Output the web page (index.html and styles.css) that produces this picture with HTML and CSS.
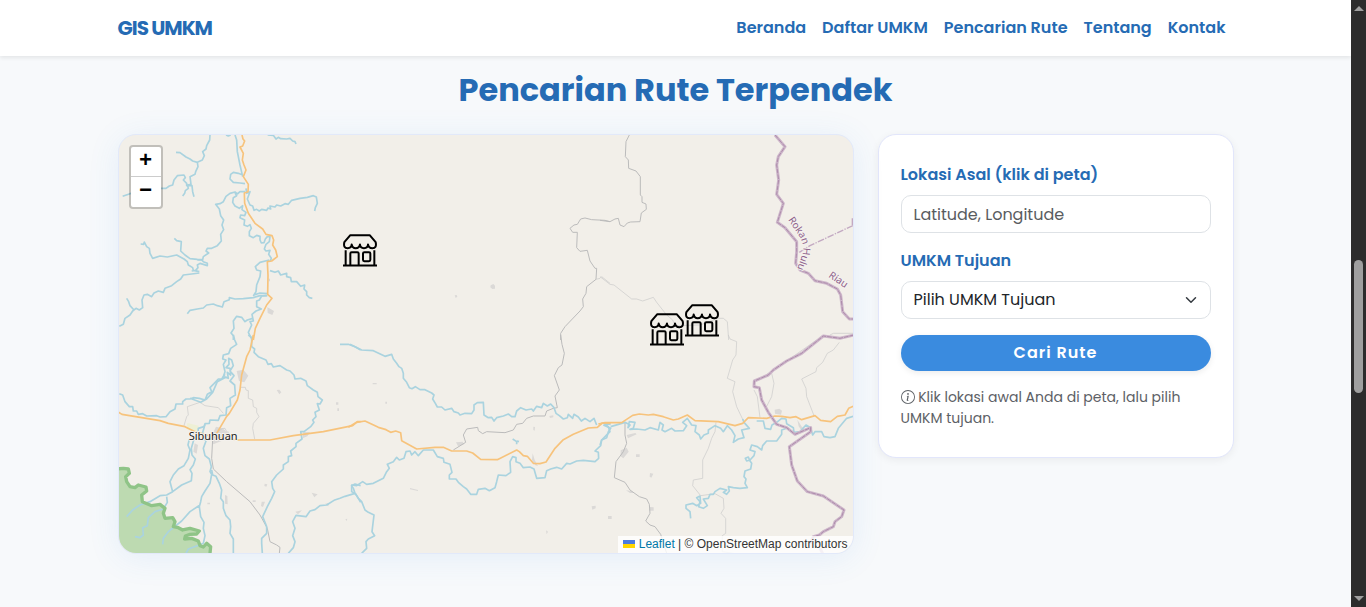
FILE: index.html
```html
<!DOCTYPE html>
<html lang="id">
<head>
<meta charset="utf-8">
<meta name="viewport" content="width=device-width, initial-scale=1">
<title>GIS UMKM</title>
<link rel="stylesheet" href="styles.css">
</head>
<body>
<div class="page">
  <header class="navbar">
    <div class="container navbar-inner">
      <a class="brand" href="#">GIS UMKM</a>
      <nav class="nav">
        <a href="#beranda">Beranda</a>
        <a href="#daftar">Daftar UMKM</a>
        <a href="#rute">Pencarian Rute</a>
        <a href="#tentang">Tentang</a>
        <a href="#kontak">Kontak</a>
      </nav>
    </div>
  </header>
  <main class="container" id="rute">
    <h2 class="title">Pencarian Rute Terpendek</h2>
    <div class="row">
      <section class="map" aria-label="Peta">
        <svg class="map-canvas" viewBox="119 135 734 418" preserveAspectRatio="xMidYMid slice">
          <defs>
            <symbol id="store" viewBox="0 0 102 98">
              <g fill="none" stroke="#000" stroke-width="6" stroke-linejoin="round">
                <path d="M22 3H80L98 24Q102 42 88 42Q77 42 75 31Q74 42 63 42Q52 42 51 31Q49 42 38 42Q28 42 26 31Q25 42 14 42Q0 42 4 24Z"/>
                <path d="M8 48V92M94 48V92M0 94H102M22 92V58Q22 54 26 54H43Q47 54 47 58V92"/>
                <rect x="60" y="54" width="22" height="27" rx="4"/>
              </g>
            </symbol>
            <path id="rokan" d="M564 284L598 334Q616 362 606 392L590 436"/>
          </defs>

          <!-- north west -->
          <g transform="translate(110 125) scale(.33333)">
            <path class="urban" d="M472 547l6 3 14 8-5 12-14-6zM476 460l4 2v7h-4z"/>
            <path class="river" d="M300 30L299 45L290 62L288 72L278 80L283 92L277 105L262 112L264 125L257 140L255 148L240 155L243 178L232 180L235 190L226 197L224 205L218 213M198 82L210 83L228 96L240 102L248 108L262 112M38 214L60 206L150 190L168 190L178 183L188 180L192 165L202 152L222 150L226 158L220 165L230 175L230 182L246 182L248 200L252 215M348 30L355 33L362 30"/>
            <path class="river" d="M375 30L380 45L382 80L390 120L398 155M398 150L385 145L370 142L362 148L360 162L370 172L390 174L405 176M473 30L490 31L498 42L505 37L512 41L530 42L540 40L548 48L555 50L558 57"/>
            <path class="river" d="M408 190L410 205L420 200L412 222L420 240L428 243L432 256L440 253L448 258L455 253L470 256L474 249L482 252L480 243L495 246L500 240L512 243L525 236L535 238L545 226L570 220L592 217L610 212L619 216L622 235L616 248L614 258"/>
            <path class="river" d="M405 200L390 200L382 207L375 201L360 205L348 214L340 230L330 236L317 238L328 252L332 272L341 285L336 300L341 314L332 328L334 348L322 362L305 370L292 370L288 378L296 384L280 395L278 404L262 403L240 401L225 390L212 378L214 350L200 347L193 340"/>
            <path class="river" d="M375 204L380 212L370 218L368 232L375 243L388 250L398 242L396 254L408 262L404 272L392 270L390 278L404 285L402 300L412 304L420 299L424 310L418 320L418 332L430 338L440 331L450 334L450 345L454 354L462 353L466 342L472 335L480 335L478 350L468 358L463 372L468 378L480 376L476 388L484 400L480 410"/>
            <path class="river" d="M92 357L101 358L103 351L110 365L118 370L120 385L128 400L150 393L172 396L200 390L222 402L232 410L235 420L248 428L250 436L268 440M262 405L275 405L280 410L292 415L292 422L270 415L262 420L264 428L257 436L245 438"/>
            <path class="river" d="M28 604L40 598L45 580L60 570L68 558L78 550L88 555L98 548L96 525L102 510L112 508L125 515L132 504L145 498L160 502L165 490L185 482L200 470L212 462L220 450L245 447L268 444M50 520L56 530L60 542L72 555"/>
            <path class="river" d="M478 405L450 412L436 425L440 435L452 438L450 455L440 480L438 500L430 513M473 506L450 504L432 510M232 566L240 556L262 552L280 549L290 540L310 537L322 542L337 546L342 530L358 524L358 518L375 522L400 521L430 518L450 512L470 512"/>
            <path class="river" d="M480 437L495 442L505 438L512 450L530 445L530 455L542 458L544 470L560 470L572 484L584 480L582 492L590 500L590 510L598 518L607 520M472 512L455 513L448 525L440 528L440 545L454 552L438 558L426 568L430 588L420 590L425 600L415 622L424 640M428 580L412 585L405 590L395 577L380 574L370 588L372 610L363 624L370 632L370 645"/>
            <path class="highway" d="M396 30L399 42L404 48L398 63L390 66L400 85L397 105L402 120L408 135L400 155L415 178L414 200L403 204L404 235L415 265L435 295L458 312L468 328L486 332L491 345L488 360L497 375L502 395L485 408L472 410L474 450L473 508L486 520L470 540L450 580L436 610L430 645"/>
          </g>

          <!-- north -->
          <g transform="translate(350 125) scale(.33333)">
            <path class="urban" d="M422 481l8-4 5 5v9l-8 1-6-5zM314 511l6-1 2 5-5 4z"/>
            <path class="road" d="M780 290L765 286L725 284L705 279L692 282L682 298L672 300L660 310L668 322L682 322L680 368L690 379L712 376L720 408L735 430L740 430L738 463L710 485L708 505L698 522L700 545L690 558L645 605L632 625L632 645"/>
            <path class="lane" d="M738 463L750 460L755 455L780 475"/>
          </g>

          <!-- north east -->
          <g transform="translate(600 125) scale(.33333)">
            <path class="road" d="M88 30L78 50L76 95L85 105L86 130L108 138L121 155L121 210L126 215L126 232L138 237L139 253L124 264L120 290L92 291L82 294L72 305L60 300L55 280L45 282L30 290L0 286"/>
            <path class="lane" d="M0 455L30 478L42 480L95 522L110 522L128 528L160 517L170 532L200 570L218 585L225 602L300 600L355 580L370 580L382 590L386 645M690 630L700 625L760 625"/>
            <path class="border" d="M525 30L555 65L535 95L530 120L536 165L530 208L550 235L532 292L555 308L590 350L590 380L587 415L600 435L625 445L645 467L680 475L712 492L722 510L728 560L748 582L762 582"/>
            <path class="border-core" d="M525 30L555 65L535 95L530 120L536 165L530 208L550 235L532 292L555 308L590 350L590 380L587 415L600 435L625 445L645 467L680 475L712 492L722 510L728 560L748 582L762 582"/>
            <path class="district" d="M598 382L630 362L762 300M757 280V302"/>
            <text class="region"><textPath href="#rokan">Rokan Hulu</textPath></text>
            <text class="region" transform="translate(684 455) rotate(34)">Riau</text>
          </g>

          <!-- south west -->
          <g transform="translate(110 335) scale(.33333)">
            <path class="urban" d="M380 108l20-4 15 18-12 20-16-4zM500 165l8-1 6 8-6 6zM254 325l10 5-4 26-10-6zM345 480l7 3 1 25-8-2zM318 275l20 5 16 14-10 20-34 14-8-18zM605 473l18 5-10 9zM455 500l10 0-6 16-6-3zM580 290l20 2-8 12-14 6zM556 530l20-4-12 12zM464 446l8 2-3 7-6-2zM678 202h7v7h-7zM682 220h5v8h-5zM428 496h9v5h-9zM706 553l6-2-2 7zM292 503h8v5h-8zM645 506l12-2-2 10z"/>
            <path class="field" d="M232 264l34 8-4 18-32-8z"/>
            <path class="forest" d="M20 398L40 400L55 402L58 415L47 425L50 440L60 455L75 458L85 450L108 456L110 468L95 480L97 500L125 512L150 508L165 520L160 535L165 550L188 548L195 560L190 575L205 578L218 585L240 580L268 588L260 597L240 598L226 603L224 612L245 610L265 618L270 632L280 636L290 625L302 635L303 670L20 670Z"/>
            <path class="road" d="M308 312L305 370L310 402L350 440L420 500L450 540L472 580L480 620L500 630L510 637L508 655"/>
            <path class="lane" d="M392 157L406 157L408 165L415 167L415 190L428 195L430 215L440 220L440 232L447 245L430 265L428 280L434 312M222 272L230 245L235 240L232 215L270 202L285 212L325 218L340 235M320 300Q330 278 345 280Q350 295 357 292"/>
            <path class="river" d="M370 0L374 15L380 28L362 40L356 56L340 60L338 72L348 75L340 88L345 110L340 125L355 130L352 112L362 120L360 100L348 98L357 88L356 70L365 75L370 92L360 108L372 122L360 138L374 150L376 180L360 190L362 212L350 218L348 240L330 242L325 256L300 255L298 265L285 266L282 275L265 280L264 292"/>
            <path class="river" d="M345 118L335 132L325 132L312 146L300 158L305 170L292 178L285 195L268 190L250 188L240 192L228 192L218 200L218 207L198 207L195 222L180 230L168 245L150 246L140 242L110 243L98 236L85 238L80 228L70 228L68 215L58 215L45 200L38 180L28 176M350 125L322 140L308 172L290 192L272 202L240 190"/>
            <path class="river" d="M415 0L425 8L425 35L434 42L432 52L445 65L468 75L474 88L484 86L490 96L510 92L530 105L540 108L552 120L555 132L572 130L588 138L592 152L610 165L622 172L624 185L637 195L630 207L622 206L628 225L615 232L618 245L608 255L612 262L602 275L582 290L572 290L576 312L558 325L558 335L542 348L545 362L535 365L535 380L520 390L520 402L500 420L485 440L488 460L494 470L485 490L472 515L458 545L470 575L470 595L455 610L455 625L457 655"/>
            <path class="river" d="M285 268L276 300L288 318L280 340L285 362L298 372L304 395L300 410L305 418L300 445L285 468L275 485L272 500L268 515L272 545L282 562L280 580L285 602L280 625L262 632L235 642L228 655M305 405L308 420L318 424L328 445L335 465L332 490L340 500L340 520L348 542L360 555L362 575L360 595L370 612L370 655M270 510L240 530L215 558L175 590L160 610L158 628"/>
            <path class="river" d="M238 312L234 330L240 345L235 370L222 392L205 402L190 420L180 440L188 470M252 312L244 340L246 360L256 372L250 390L240 404L246 415L244 437L215 450L188 470L170 480L150 482L120 500L90 510L68 525L50 545M170 485L172 502L160 522L135 530L115 548L112 572L98 578L100 600L90 608L75 605"/>
            <path class="river" d="M535 655L550 638L555 620L548 602L555 580L548 560L558 541L588 545L600 528L615 524L630 512L650 510L672 496L690 490L705 484L735 475L730 460L725 452L735 447L752 452M735 475L745 490L752 502M690 28L715 28L735 35L752 45"/>
            <path class="highway" d="M430 0L420 45L410 65L395 120L390 165L382 195L358 235L350 244L320 295M20 228L36 238L150 257L175 265L225 275L255 290L310 306L385 315L480 315L550 302L640 290L728 272L742 260L752 260"/>
            <path class="forest-edge" d="M20 402L40 400L55 402L58 415L47 425L50 440L60 455L75 458L85 450L108 456L110 468L95 480L97 500L125 512L150 508L165 520L160 535L165 550L188 548L195 560L190 575L205 578L218 585L240 580L268 588L260 597L240 598L226 603L224 612L245 610L265 618L270 632L280 636L290 625L302 635L300 655"/>
            <text class="town" x="236" y="314">Sibuhuan</text>
          </g>

          <!-- south -->
          <g transform="translate(350 335) scale(.33333)">
            <path class="urban" d="M318 322l20-2 4 8-18 6zM725 514l12-2v8l-10 4zM588 586l6 4-4 8zM598 243l12-2v6l-10 2zM68 144h12v4h-12zM106 200h5v6h-5zM180 459l24 6v3l-24-5zM550 275l5 1-1 11-4-2zM548 355l6 20 10 18-8-2-10-16zM775 543h6v8h-6z"/>
            <path class="road" d="M632 0L636 28L643 55L636 90L625 98L613 122L628 165L615 183L622 218L610 220L590 228L585 243L550 243L530 250L518 265L500 268L490 285L465 293L410 290L398 296L385 287L383 277L350 282L340 300L347 322L310 345"/>
            <path class="river" d="M0 28L35 45L70 47L105 64L125 58L130 72L140 85L147 95L155 100L160 115L160 130L170 142L178 158L186 161L196 155L210 164L225 164L245 174L252 180L248 192L256 205L262 216L275 216L285 225L305 220L312 230L325 234L330 240L345 235L365 236L372 225L372 210L382 203L400 202L402 240L415 248L425 247L432 258L440 248L460 243L475 237L485 245L495 245L500 228L512 218L528 225L545 222L550 228L560 214L575 218L580 205L592 213L602 207L612 218L618 235L628 242L640 252L652 248L655 238L668 250L672 238L685 246L694 258L705 250L720 260L732 250L740 270"/>
            <path class="river" d="M782 268L760 264L775 275L780 290L768 302L755 315L752 332L735 348L745 352L746 370L735 380L700 376L680 378L660 387L650 385L635 402L620 397L602 402L590 407L585 428L560 430L552 402L540 396L520 398L510 385L498 380L498 368L488 365L480 380L482 412L468 422L445 420L440 440L435 458L418 467L405 460L385 463L380 478L362 478L350 462L340 455L325 442L318 432L298 432L298 420L306 412L300 388L282 382L280 370L262 365L250 345L220 345L205 362L195 350L185 360L180 348L168 350L162 370L148 375L140 367L130 380L112 388L118 400L110 410L100 430L70 445L50 448L38 440L20 452L5 450L5 470L18 478L25 490L35 500L45 525L55 532L72 540L66 590L74 602L55 612L48 620L50 640L35 655M488 312L500 320L500 328M500 318L507 320"/>
            <path class="highway" d="M-5 277L20 262L45 258L85 277L108 284L122 292L137 288L152 293L155 317L200 342L255 337L280 337L305 348L350 348L368 354L392 373L442 374L500 345L508 350L520 362L532 364L550 385L570 386L588 381L615 340L640 314L670 298L715 279L742 277L757 264L782 264"/>
          </g>

          <!-- south east -->
          <g transform="translate(600 335) scale(.33333)">
            <path class="urban" d="M524 224l14-3 8 6-3 12-18-3zM592 254l14 22 8 6-10 4-8-12zM80 300l26-6 4 4-26 12zM62 346l18-8 6 12-16 20-8-6zM108 358h11v8h-11zM150 414l10 2-6 12-5-3zM148 516l13 1v10h-13zM24 543h11v9h-11zM78 466l18 2 4 6-10 0z"/>
            <path class="road" d="M75 262L75 300L80 325L70 350L48 380L43 428L75 442L90 465L118 485L140 492L148 508L150 535L137 558L150 570L165 575L182 598L200 655"/>
            <path class="lane" d="M348 262L345 290L335 310L325 340L308 375L308 430L280 435L278 452L302 482L345 476L370 490L372 520L363 535L377 550L377 595L367 602L367 650L400 655M385 0L390 12L410 20L408 60L398 75L382 130L405 140L398 170L410 215L430 257M718 22L700 45L682 55L668 82L650 98L648 110L605 132L618 160L620 185L642 242M462 165L472 185L480 248M515 115L522 145L515 185L498 218M600 50L640 22L665 10M500 118L560 78L600 50"/>
            <path class="river" d="M0 330L5 315L20 308L25 290L32 280L10 270M32 275L55 268L75 262L90 270L84 278L88 260L105 262L100 280L90 283L110 282L135 285L150 278L175 285L180 262L190 270L186 285L195 290L215 280L225 288L250 287L260 272L248 262L262 250L275 270L288 272L285 290L298 300L302 312L312 300L325 295L325 285L345 272L362 280L370 290L382 272L395 285L405 302L400 322L415 312L432 308L425 285L448 280L432 262L428 252M470 258L490 258L495 280L512 283L516 270L530 262L545 250L558 252L560 266L580 278L582 292L600 290L618 270L632 278L638 300L645 290L665 290L672 305L690 308L705 305L715 280L740 250L762 243"/>
            <path class="river" d="M560 280L545 285L545 298L530 318L500 318L488 332L485 345L472 335L455 330L450 345L465 350L462 362L450 375L440 378L436 370L445 366L450 378L455 385L452 402L435 408L432 425L438 432L435 445L442 458L420 460L400 458L385 455L388 468L380 478L370 472L380 465L360 460L345 470L340 478L330 478L325 490L310 492L322 512L310 520L296 515L300 500L290 488L300 483L302 505L290 512L278 505L258 510L258 520L270 530L272 550"/>
            <path class="highway" d="M-5 267L15 263L65 263L98 241L118 237L145 240L160 238L190 245L220 255L235 252L262 240L285 257L355 260L405 272L428 265L445 248L500 250L525 243L545 244L570 248L588 245L605 254L645 242L662 256L692 260L712 244L735 240L746 220L762 213"/>
            <path class="border" d="M762 0L720 10L670 3L605 55L560 78L520 105L505 120L463 138L462 155L478 158L485 195L505 232L530 268L560 278L585 298L632 278L632 290L568 335L575 390L592 438L622 470L670 483L732 525L725 545L705 560L700 575L670 590L658 600L640 605L630 625M668 655L660 640"/>
            <path class="border-core" d="M762 0L720 10L670 3L605 55L560 78L520 105L505 120L463 138L462 155L478 158L485 195L505 232L530 268L560 278L585 298L632 278L632 290L568 335L575 390L592 438L622 470L670 483L732 525L725 545L705 560L700 575L670 590L658 600L640 605L630 625"/>
          </g>

          <use href="#store" x="343" y="234" width="34" height="33"/>
          <use href="#store" x="650" y="313" width="34" height="33"/>
          <use href="#store" x="685" y="304" width="34" height="33"/>
        </svg>
        <div class="zoom">
          <button type="button" aria-label="Perbesar">+</button>
          <button type="button" aria-label="Perkecil">−</button>
        </div>
        <div class="attribution">
          <a href="#leaflet"><svg class="flag" viewBox="0 0 12 8" aria-hidden="true"><path fill="#4c7be1" d="M0 0h12v4H0z"/><path fill="#ffd500" d="M0 4h12v4H0z"/></svg> Leaflet</a>
          | © OpenStreetMap contributors
        </div>
      </section>
      <form class="card">
        <label for="asal">Lokasi Asal (klik di peta)</label>
        <input class="control" id="asal" type="text" placeholder="Latitude, Longitude" readonly>
        <label for="tujuan">UMKM Tujuan</label>
        <div class="select-wrap">
          <select class="control" id="tujuan"><option>Pilih UMKM Tujuan</option></select>
          <svg class="chevron" viewBox="0 0 16 16" aria-hidden="true"><path d="m2 5 6 6 6-6"/></svg>
        </div>
        <button class="submit" type="button">Cari Rute</button>
        <p class="hint"><svg class="info" viewBox="0 0 16 16" aria-hidden="true"><path d="M8 15A7 7 0 1 1 8 1a7 7 0 0 1 0 14m0 1A8 8 0 1 0 8 0a8 8 0 0 0 0 16"/><path d="m8.93 6.588-2.29.287-.082.38.45.083c.294.07.352.176.288.469l-.738 3.468c-.194.897.105 1.319.808 1.319.545 0 1.178-.252 1.465-.598l.088-.416c-.2.176-.492.246-.686.246-.275 0-.375-.193-.304-.533zM9 4.5a1 1 0 1 1-2 0 1 1 0 0 1 2 0"/></svg> Klik lokasi awal Anda di peta, lalu pilih UMKM tujuan.</p>
      </form>
    </div>
  </main>
</div>
<div class="scrollbar" aria-hidden="true">
  <span class="arrow arrow-up"></span>
  <span class="thumb"></span>
  <span class="arrow arrow-down"></span>
</div>
</body>
</html>
```
FILE: styles.css
```css
* {
  box-sizing: border-box;
}

body {
  margin: 0;
  display: flex;
  min-height: 100vh;
  background: #f7f9fb;
  color: #212529;
  font-family: Poppins, Inter, "Open Sans", sans-serif;
  font-size: 16px;
  line-height: 24px;
}

a {
  color: #256bb4;
  text-decoration: none;
}

.page {
  flex: 1;
  min-width: 0;
}

.container {
  max-width: 1140px;
  margin: 0 auto;
  padding: 0 12px;
}

.navbar {
  background: #fff;
  box-shadow: 0 2px 4px rgba(0, 0, 0, .08);
}

.navbar-inner {
  display: flex;
  align-items: center;
  justify-content: space-between;
  min-height: 56px;
}

.brand {
  font-size: 20px;
  font-weight: 700;
  letter-spacing: -1px;
}

.nav {
  display: flex;
  flex-wrap: wrap;
}

.nav a {
  padding: 8px;
  font-weight: 600;
}

.title {
  margin: 0;
  padding: 14px 0 24px;
  color: #256bb4;
  font-size: 32px;
  font-weight: 700;
  line-height: 40px;
  text-align: center;
}

.row {
  display: grid;
  grid-template-columns: minmax(0, 736fr) minmax(0, 356fr);
  align-items: start;
  gap: 24px;
}

.map {
  position: relative;
  height: 420px;
  overflow: hidden;
  border: 1px solid #e2e9fa;
  border-radius: 18px;
  background: #f2efe9;
  box-shadow: 0 4px 32px rgba(58, 139, 223, .1);
}

.map-canvas {
  display: block;
  width: 100%;
  height: 100%;
}

.map-canvas path {
  stroke-linejoin: round;
}

.river,
.highway,
.road,
.lane,
.border,
.border-core,
.district,
.forest-edge {
  fill: none;
}

.river {
  stroke: #aad3df;
  stroke-width: 5;
}

.highway {
  stroke: #f7c37c;
  stroke-width: 5;
}

.road {
  stroke: #bbb;
  stroke-width: 3;
}

.lane {
  stroke: #c9c8c8;
  stroke-width: 2;
}

.border {
  stroke: #cdb6ca;
  stroke-width: 9;
}

.border-core {
  stroke: #ad8cab;
  stroke-width: 3;
  stroke-dasharray: 14 3;
}

.district {
  stroke: #c3a9c2;
  stroke-width: 4;
  stroke-dasharray: 20 4 4 4;
}

.urban {
  fill: #dbd9d7;
}

.field {
  fill: #eef0d5;
}

.forest {
  fill: #bddab1;
}

.forest-edge {
  stroke: #8fc487;
  stroke-width: 10;
}

.region,
.town {
  font-family: "Noto Sans", sans-serif;
  paint-order: stroke;
  stroke: #f5f2ee;
  stroke-width: 6px;
}

.region {
  fill: #8d618b;
  font-size: 30px;
}

.town {
  fill: #222;
  font-size: 33px;
}

.zoom {
  position: absolute;
  top: 10px;
  left: 10px;
  display: flex;
  flex-direction: column;
  border: 2px solid rgba(0, 0, 0, .2);
  border-radius: 4px;
  background: #fff;
  background-clip: padding-box;
}

.zoom button {
  width: 30px;
  height: 30px;
  padding: 0;
  border: 0;
  background: none;
  color: #000;
  font: bold 22px/30px "Liberation Mono", monospace;
}

.zoom button:first-child {
  border-bottom: 1px solid #ccc;
}

.attribution {
  position: absolute;
  right: 0;
  bottom: 0;
  padding: 0 5px;
  background: rgba(255, 255, 255, .8);
  color: #333;
  font: 12px/17px "Liberation Sans", sans-serif;
}

.attribution a {
  color: #0078a8;
}

.flag {
  width: 12px;
  height: 8px;
}

.card {
  display: flex;
  flex-direction: column;
  padding: 28px 22px;
  border: 1px solid #e2e6fb;
  border-radius: 18px;
  background: #fff;
  box-shadow: 0 2px 8px rgba(0, 0, 0, .06);
}

.card label {
  margin-bottom: 8px;
  color: #256bb4;
  font-weight: 600;
}

.control {
  width: 100%;
  height: 38px;
  margin-bottom: 16px;
  padding: 6px 12px;
  border: 1px solid #dee2e6;
  border-radius: 10px;
  background: #fff;
  color: #212529;
  font: inherit;
}

.control::placeholder {
  color: #595c5f;
  opacity: 1;
}

.select-wrap {
  position: relative;
}

select.control {
  display: block;
  appearance: none;
}

.chevron {
  position: absolute;
  top: 13px;
  right: 14px;
  width: 12px;
  height: 12px;
  fill: none;
  stroke: #343a40;
  stroke-width: 2;
  stroke-linecap: round;
  stroke-linejoin: round;
  pointer-events: none;
}

.submit {
  height: 36px;
  padding: 0;
  border: 0;
  border-radius: 18px;
  background: #3a8bdf;
  box-shadow: 0 2px 6px rgba(0, 0, 0, .08);
  color: #fff;
  font: inherit;
  font-weight: 600;
  letter-spacing: 1px;
}

.hint {
  margin: 16px 0 0;
  color: #5d6166;
  font-size: 14px;
  line-height: 21px;
}

.info {
  width: 14px;
  height: 14px;
  fill: currentColor;
  vertical-align: -2px;
}

.scrollbar {
  position: sticky;
  top: 0;
  display: flex;
  flex-direction: column;
  align-items: center;
  width: 15px;
  height: 100vh;
  padding: 6px 0;
  background: #2c2c2c;
}

.arrow {
  border: 5px solid transparent;
}

.arrow-up {
  border-top: 0;
  border-bottom: 5px solid #9f9f9f;
}

.arrow-down {
  border-top: 5px solid #9f9f9f;
  border-bottom: 0;
}

.thumb {
  width: 9px;
  height: 22vh;
  margin: 41vh 0 auto;
  border-radius: 5px;
  background: #9f9f9f;
}
```
